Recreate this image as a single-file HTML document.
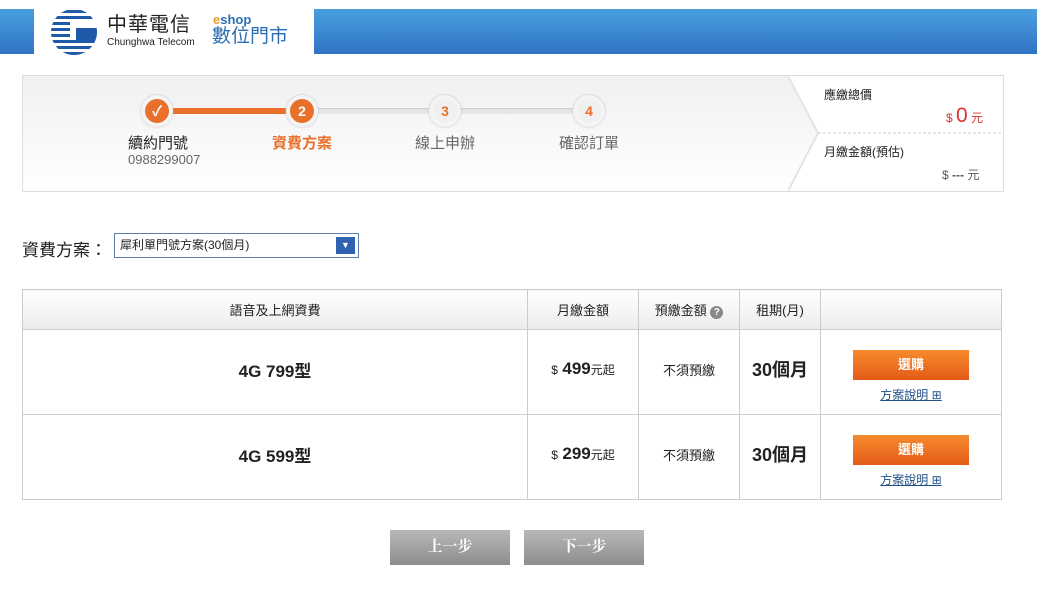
<!DOCTYPE html>
<html><head><meta charset="utf-8"><style>
*{margin:0;padding:0;box-sizing:border-box}
body{width:1037px;height:603px;background:#fff;font-family:"Liberation Sans","Noto Sans CJK TC",sans-serif;position:relative;overflow:hidden;color:#222}
.abs{position:absolute}
.bar{top:9px;height:45px;background:linear-gradient(#4aa0df,#2f73c4)}
.panel{left:22px;top:75px;width:982px;height:117px;border:1px solid #ddd;background:linear-gradient(#f0f0f0,#fff)}
.circ{width:32px;height:32px;border-radius:50%;background:#f4f4f4;box-shadow:0 0 2px #bbb;}
.circ i{position:absolute;left:4px;top:4px;width:24px;height:24px;border-radius:50%;font-style:normal;color:#fff;font-weight:bold;font-size:14px;text-align:center;line-height:24px}
table{position:absolute;left:22px;top:289px;width:980px;border-collapse:collapse}
td,th{border:1px solid #ccc;text-align:center;font-weight:normal}
th{height:40px;background:linear-gradient(#fff,#ececec);font-size:13px}
td{height:85px;padding-bottom:6px}
td.b{padding-top:8px;padding-bottom:0}
.buy{display:block;margin:0 auto;width:116px;height:30px;background:linear-gradient(#f68b2d,#e45b17);color:#fff;font-weight:bold;font-size:13px;line-height:30px}
.lnk{display:block;margin-top:6px;font-size:12px;color:#1f4f87;text-decoration:underline}
.btn{top:530px;width:120px;height:35px;background:linear-gradient(#b8b8b8,#8d8d8d);color:#fff;font-weight:bold;font-size:15px;text-align:center;line-height:35px;font-family:"Liberation Serif","Noto Serif CJK SC",serif}
</style></head><body>
<div class="abs bar" style="left:0;width:34px"></div>
<div class="abs bar" style="left:314px;width:723px"></div>
<svg class="abs" style="left:50px;top:8px" width="48" height="48" viewBox="0 0 48 48">
<defs><clipPath id="c"><circle cx="24" cy="24" r="23"/></clipPath></defs>
<g clip-path="url(#c)" fill="#1f5aa8">
<rect x="0" y="2" width="48" height="3"/><rect x="0" y="8" width="48" height="3"/><rect x="0" y="14" width="20" height="3"/><rect x="0" y="20" width="20" height="3"/><rect x="0" y="26" width="20" height="3"/><rect x="0" y="32" width="48" height="3"/><rect x="0" y="38" width="48" height="3"/><rect x="0" y="44" width="48" height="3"/>
<rect x="26" y="20" width="22" height="12"/></g></svg>
<div class="abs" style="left:107px;top:15px;font-size:20px;line-height:20px;color:#222;letter-spacing:1px">中華電信</div>
<div class="abs" style="left:107px;top:38px;font-size:10px;line-height:10px;color:#222">Chunghwa Telecom</div>
<div class="abs" style="left:213px;top:13px;font-size:13px;line-height:13px;color:#2a6fb5;font-weight:bold"><span style="color:#e8a030">e</span>shop</div>
<div class="abs" style="left:212px;top:27px;font-size:19px;line-height:20px;color:#2a6fb5">數位門市</div>

<div class="abs panel"></div>
<svg class="abs" style="left:788px;top:76px" width="215" height="115"><path d="M0 0 L30 57 L0 115 L215 115 L215 0 Z" fill="#fff"/><path d="M0 0 L30 57 L0 115" fill="none" stroke="#e4e4e4" stroke-width="2"/><line x1="30" y1="57" x2="215" y2="57" stroke="#ccc" stroke-dasharray="3 2"/></svg>
<div class="abs" style="left:157px;top:108px;width:432px;height:6px;background:#e6e6e6;box-shadow:inset 0 1px 1px #ccc"></div>
<div class="abs" style="left:157px;top:108px;width:145px;height:6px;background:#e8702b"></div>
<div class="abs circ" style="left:141px;top:95px"><i style="background:#e8702b">✓</i></div>
<div class="abs circ" style="left:286px;top:95px"><i style="background:#e8702b">2</i></div>
<div class="abs circ" style="left:429px;top:95px"><i style="background:#f0f0f0;color:#e8702b">3</i></div>
<div class="abs circ" style="left:573px;top:95px"><i style="background:#f0f0f0;color:#e8702b">4</i></div>
<div class="abs" style="left:128px;top:132px;font-size:15px">續約門號</div>
<div class="abs" style="left:128px;top:152px;font-size:13px;color:#666">0988299007</div>
<div class="abs" style="left:272px;top:132px;font-size:15px;color:#e8702b;font-weight:bold">資費方案</div>
<div class="abs" style="left:415px;top:132px;font-size:15px;color:#666">線上申辦</div>
<div class="abs" style="left:559px;top:132px;font-size:15px;color:#666">確認訂單</div>
<div class="abs" style="left:824px;top:86px;font-size:12px">應繳總價</div>
<div class="abs" style="left:946px;top:104px;font-size:12px;color:#d33"><span>$</span> <span style="font-size:21px">0</span> 元</div>
<div class="abs" style="left:824px;top:143px;font-size:12px">月繳金額(預估)</div>
<div class="abs" style="left:942px;top:166px;font-size:12px;color:#555">$ <b>---</b> 元</div>

<div class="abs" style="left:22px;top:236px;font-size:17px">資費方案：</div>
<div class="abs" style="left:114px;top:233px;width:245px;height:25px;border:1px solid #5a7fb0;font-size:12px;line-height:22px;padding-left:5px">犀利單門號方案(30個月)
<span class="abs" style="right:3px;top:3px;width:19px;height:17px;background:#2f62b0;color:#fff;font-size:9px;text-align:center;line-height:17px">▼</span></div>

<table>
<tr><th style="width:505px">語音及上網資費</th><th style="width:111px">月繳金額</th><th style="width:101px">預繳金額 <span style="display:inline-block;width:13px;height:13px;border-radius:50%;background:#888;color:#fff;font-size:10px;line-height:13px;font-weight:bold">?</span></th><th style="width:81px">租期(月)</th><th></th></tr>
<tr><td style="font-size:17px;font-weight:bold">4G 799型</td><td><span style="font-size:12px">$</span> <b style="font-size:17px">499</b><span style="font-size:12px">元起</span></td><td style="font-size:13px">不須預繳</td><td style="font-size:18px;font-weight:bold">30個月</td><td class="b"><span class="buy">選購</span><span class="lnk">方案說明 ⊞</span></td></tr>
<tr><td style="font-size:17px;font-weight:bold">4G 599型</td><td><span style="font-size:12px">$</span> <b style="font-size:17px">299</b><span style="font-size:12px">元起</span></td><td style="font-size:13px">不須預繳</td><td style="font-size:18px;font-weight:bold">30個月</td><td class="b"><span class="buy">選購</span><span class="lnk">方案說明 ⊞</span></td></tr>
</table>
<div class="abs btn" style="left:390px">上一步</div>
<div class="abs btn" style="left:524px">下一步</div>
</body></html>
